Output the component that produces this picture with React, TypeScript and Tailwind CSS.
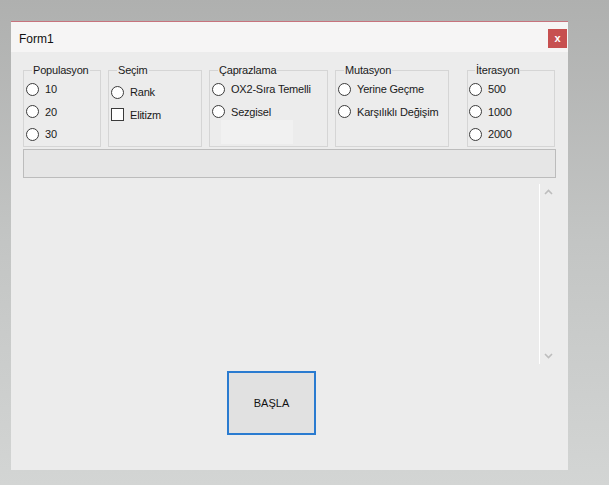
const font = { fontFamily: '"Liberation Sans", Arial, sans-serif' };

const Radio = ({ label }: { label: string }) => (
  <div className="flex h-[22.5px] items-center gap-[6px]">
    <span className="h-[13px] w-[13px] shrink-0 rounded-full border border-[#3b3b3b] bg-white" />
    <span className="text-[11px] tracking-[-0.2px] text-[#1a1a1a]">{label}</span>
  </div>
);

const Check = ({ label }: { label: string }) => (
  <div className="flex h-[22.5px] items-center gap-[6px]">
    <span className="h-[13px] w-[13px] shrink-0 border border-[#3b3b3b] bg-white" />
    <span className="text-[11px] tracking-[-0.2px] text-[#1a1a1a]">{label}</span>
  </div>
);

const Group = ({
  title,
  width,
  children,
  pad = "pl-[2px]",
}: {
  title: string;
  width: string;
  children: React.ReactNode;
  pad?: string;
}) => (
  <fieldset className={`${width} h-[83px] border border-[#d5d5d5] ${pad} pt-0`}>
    <legend className="ml-[6px] px-[1px] text-[11px] leading-[12px] tracking-[-0.2px] text-[#1a1a1a]">
      {title}
    </legend>
    <div className="mt-[2px] flex flex-col">{children}</div>
  </fieldset>
);

export default function App() {
  return (
    <div
      className="h-[485px] w-[609px] overflow-hidden bg-linear-to-b from-[#afb0af] via-[#c3c5c4] to-[#d3d5d4] pl-[11px] pt-[21px]"
      style={font}
    >
      <div className="flex h-[449px] w-[557px] flex-col bg-[#ececec]">
        {/* title bar */}
        <div className="flex h-[31px] items-start justify-between border-t border-[#c7737d] bg-[#f6f5f5]">
          <span className="mt-[8px] pl-[8px] text-[12px] text-[#111]">Form1</span>
          <button className="mr-[1px] mt-[7px] flex h-[19px] w-[19px] items-center justify-center bg-[#c75050] text-[11px] font-bold leading-none text-white">
            x
          </button>
        </div>

        {/* body */}
        <div className="flex flex-1 flex-col px-[12px] pt-[12px]">
          <div className="flex">
            <Group title="Populasyon" width="w-[78px]">
              <Radio label="10" />
              <Radio label="20" />
              <Radio label="30" />
            </Group>
            <div className="ml-[7px]">
              <Group title="Seçim" width="w-[94px]">
                <div className="mt-[3px]">
                  <Radio label="Rank" />
                  <Check label="Elitizm" />
                </div>
              </Group>
            </div>
            <div className="ml-[7px]">
              <Group title="Çaprazlama" width="w-[119px]">
                <Radio label="OX2-Sıra Temelli" />
                <Radio label="Sezgisel" />
                <div className="ml-[9px] -mt-[3px] h-[24px] w-[72px] bg-[#f1f1f1]" />
              </Group>
            </div>
            <div className="ml-[7px]">
              <Group title="Mutasyon" width="w-[114px]">
                <Radio label="Yerine Geçme" />
                <Radio label="Karşılıklı Değişim" />
              </Group>
            </div>
            <div className="ml-[18px]">
              <Group title="İterasyon" width="w-[88px]" pad="pl-[1px]">
                <Radio label="500" />
                <Radio label="1000" />
                <Radio label="2000" />
              </Group>
            </div>
          </div>

          {/* progress bar */}
          <div className="mt-[2px] h-[29px] w-[533px] border border-[#bcbcbc] bg-[#e6e6e6]" />

          {/* list area with scrollbar */}
          <div className="mt-[6px] flex h-[180px] w-[533px] justify-end">
            <div className="flex w-[17px] flex-col items-center justify-between border-l border-white pb-[5px] pt-[5px]">
              <svg width="9" height="6" viewBox="0 0 9 6" className="ml-[1px]">
                <path d="M1 5 L4.5 1.5 L8 5" fill="none" stroke="#bdbdbd" strokeWidth="1.6" />
              </svg>
              <svg width="9" height="6" viewBox="0 0 9 6" className="ml-[1px]">
                <path d="M1 1 L4.5 4.5 L8 1" fill="none" stroke="#bdbdbd" strokeWidth="1.6" />
              </svg>
            </div>
          </div>

          {/* button */}
          <div className="mt-[7px] pl-[204px]">
            <button className="flex h-[64px] w-[89px] items-center justify-center border-2 border-[#2a7bd0] bg-[#e1e1e1] text-[11px] text-[#111]">
              BAŞLA
            </button>
          </div>
        </div>
      </div>
    </div>
  );
}
